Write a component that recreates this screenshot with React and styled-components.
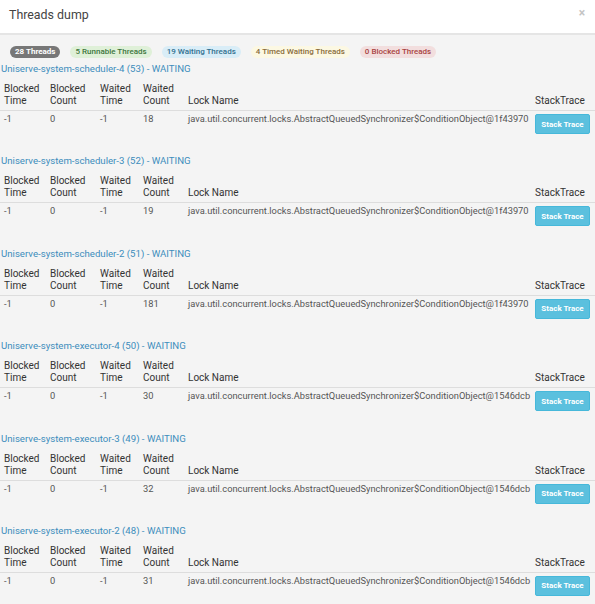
import React from "react";
import styled, { createGlobalStyle } from "styled-components";

const Global = createGlobalStyle`
  html, body { margin: 0; padding: 0; background: #f4f4f4; }
  body { font-family: Roboto, "Liberation Sans", Arial, sans-serif; }
`;

const Modal = styled.div`
  width: 595px;
  height: 604px;
  overflow: hidden;
  background: #f4f4f4;
`;

const Header = styled.div`
  height: 33px;
  background: #fff;
  border-bottom: 2px solid #e5e5e5;
  display: flex;
  align-items: center;
  justify-content: space-between;
  padding: 0 10px 0 9px;
  box-sizing: content-box;
`;

const Title = styled.h4`
  margin: -4px 0 0;
  font-size: 12.4px;
  font-weight: 400;
  color: #444;
`;

const Close = styled.span`
  font-size: 12px;
  color: #c4c4c4;
  font-weight: 700;
  margin-top: -8px;
`;

const Body = styled.div`
  padding-top: 11px;
`;

const Badges = styled.div`
  display: flex;
  gap: 10px;
  padding-left: 10px;
  margin-bottom: 4px;
`;

const Badge = styled.span`
  height: 12px;
  line-height: 12px;
  padding: 0 5px;
  border-radius: 7px;
  font-size: 8px;
  font-weight: ${(p) => (p.$dark ? 700 : 500)};
  background: ${(p) => p.$bg};
  color: ${(p) => p.$fg};
  white-space: nowrap;
`;

const Section = styled.div`
  margin-bottom: 17.4px;
`;

const ThreadName = styled.div`
  font-size: 9.65px;
  line-height: 14px;
  color: #3c8dbc;
  padding-left: 1px;
  margin-bottom: 1px;
`;

const Table = styled.table`
  width: 595px;
  table-layout: fixed;
  border-collapse: collapse;
`;

const Th = styled.th`
  text-align: left;
  vertical-align: bottom;
  font-size: 10px;
  font-weight: 400;
  color: #333;
  line-height: 12px;
  padding: 6px 4px 3px;
  border-bottom: 1px solid #ddd;
`;

const Td = styled.td`
  vertical-align: top;
  font-size: 9.3px;
  color: #555;
  line-height: 10px;
  padding: 3px 4px;
  white-space: nowrap;
`;

const Button = styled.button`
  display: block;
  width: 55px;
  height: 20px;
  padding: 0;
  border: 1px solid #46b8da;
  border-radius: 2px;
  background: #5bc0de;
  color: #fff;
  font-family: Roboto, "Liberation Sans", Arial, sans-serif;
  font-size: 8px;
  font-weight: 700;
`;

const cols = [46, 50, 43, 45, 347, 64];

const threads = [
  ["Uniserve-system-scheduler-4 (53) - WAITING", "18", "1f43970"],
  ["Uniserve-system-scheduler-3 (52) - WAITING", "19", "1f43970"],
  ["Uniserve-system-scheduler-2 (51) - WAITING", "181", "1f43970"],
  ["Uniserve-system-executor-4 (50) - WAITING", "30", "1546dcb"],
  ["Uniserve-system-executor-3 (49) - WAITING", "32", "1546dcb"],
  ["Uniserve-system-executor-2 (48) - WAITING", "31", "1546dcb"],
];

export default function App() {
  return (
    <Modal>
      <Global />
      <Header>
        <Title>Threads dump</Title>
        <Close>×</Close>
      </Header>
      <Body>
        <Badges>
          <Badge $dark $bg="#777" $fg="#fff">28 Threads</Badge>
          <Badge $bg="#dff0d8" $fg="#3c763d">5 Runnable Threads</Badge>
          <Badge $bg="#d9edf7" $fg="#31708f">19 Waiting Threads</Badge>
          <Badge $bg="#fcf8e3" $fg="#8a6d3b">4 Timed Waiting Threads</Badge>
          <Badge $bg="#f2dede" $fg="#a94442">0 Blocked Threads</Badge>
        </Badges>
        {threads.map(([name, count, hash]) => (
          <Section key={name}>
            <ThreadName>{name}</ThreadName>
            <Table>
              <colgroup>
                {cols.map((w, i) => (
                  <col key={i} style={{ width: w }} />
                ))}
              </colgroup>
              <thead>
                <tr>
                  <Th>Blocked<br />Time</Th>
                  <Th>Blocked<br />Count</Th>
                  <Th>Waited<br />Time</Th>
                  <Th>Waited<br />Count</Th>
                  <Th>Lock Name</Th>
                  <Th>StackTrace</Th>
                </tr>
              </thead>
              <tbody>
                <tr>
                  <Td>-1</Td>
                  <Td>0</Td>
                  <Td>-1</Td>
                  <Td>{count}</Td>
                  <Td>
                    java.util.concurrent.locks.AbstractQueuedSynchronizer$ConditionObject@{hash}
                  </Td>
                  <Td>
                    <Button>Stack Trace</Button>
                  </Td>
                </tr>
              </tbody>
            </Table>
          </Section>
        ))}
      </Body>
    </Modal>
  );
}
